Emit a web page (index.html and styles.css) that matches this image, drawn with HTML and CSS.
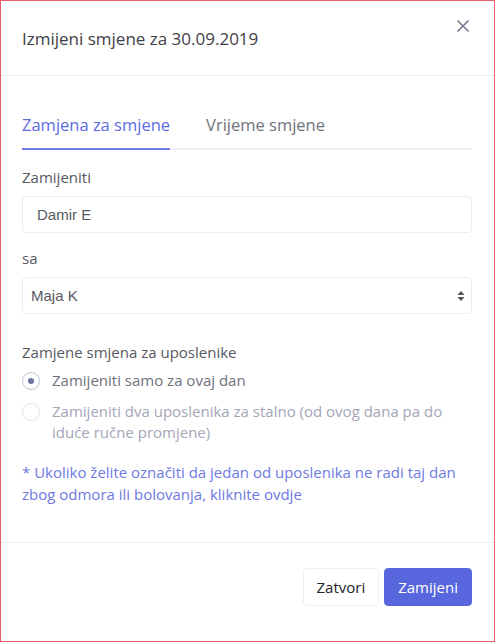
FILE: index.html
```html
<!DOCTYPE html>
<html lang="hr">
<head>
<meta charset="utf-8">
<title>Izmijeni smjene</title>
<link rel="stylesheet" href="styles.css">
</head>
<body>
<div class="modal">
  <div class="modal-header">
    <h5 class="modal-title">Izmijeni smjene za 30.09.2019</h5>
    <button class="close" type="button" aria-label="Close">
      <svg width="14" height="14" viewBox="0 0 14 14"><path d="M1.5 1.5 L12.5 12.5 M12.5 1.5 L1.5 12.5" stroke="#74788d" stroke-width="1.6" fill="none"/></svg>
    </button>
  </div>
  <div class="modal-body">
    <div class="tabs">
      <a class="tab active">Zamjena za smjene</a>
      <a class="tab">Vrijeme smjene</a>
    </div>
    <div class="group">
      <label class="label">Zamijeniti</label>
      <div class="input">Damir E</div>
    </div>
    <div class="group">
      <label class="label">sa</label>
      <div class="input select">
        <span>Maja K</span>
        <svg width="8" height="12" viewBox="0 0 8 12"><path d="M4 1 L7.5 5 L0.5 5 Z M4 11 L7.5 7 L0.5 7 Z" fill="#555"/></svg>
      </div>
    </div>
    <div class="radios">
      <div class="label">Zamjene smjena za uposlenike</div>
      <div class="radio checked"><span class="dot"></span><span>Zamijeniti samo za ovaj dan</span></div>
      <div class="radio disabled"><span class="dot"></span><span>Zamijeniti dva uposlenika za stalno (od ovog dana pa do iduće ručne promjene)</span></div>
    </div>
    <p class="note">* Ukoliko želite označiti da jedan od uposlenika ne radi taj dan zbog odmora ili bolovanja, kliknite ovdje</p>
  </div>
  <div class="modal-footer">
    <button class="btn btn-light" type="button">Zatvori</button>
    <button class="btn btn-primary" type="button">Zamijeni</button>
  </div>
</div>
</body>
</html>
```
FILE: styles.css
```css
* { box-sizing: border-box; }
html, body { margin: 0; padding: 0; background: #fff; }
body { font-family: "Open Sans", "DejaVu Sans", sans-serif; }
.modal {
  width: 495px;
  height: 642px;
  border: 1px solid #ea5a6c;
  background: #fff;
  display: flex;
  flex-direction: column;
}
.modal-header {
  height: 75px;
  flex: none;
  border-bottom: 1px solid #ebedf2;
  display: flex;
  align-items: center;
  justify-content: space-between;
  padding: 0 24px 0 21px;
}
.modal-title {
  margin: 0;
  font-size: 17px;
  font-weight: 400;
  color: #3f4047;
}
.close {
  border: 0;
  background: none;
  padding: 0;
  margin-top: -25px;
  display: flex;
}
.modal-body {
  flex: 1;
  padding: 37px 22px 0 21px;
}
.tabs {
  display: flex;
  border-bottom: 2px solid #f0f1f6;
  margin-bottom: 17px;
}
.tab {
  font-size: 16.5px;
  color: #6f727d;
  padding: 0 0 12px;
  margin-right: 36px;
  margin-bottom: -2px;
  border-bottom: 2px solid transparent;
}
.tab.active { color: #5d6cdf; border-bottom-color: #6e7ce3; }
.group { margin-bottom: 14px; }
.label {
  display: block;
  font-size: 15px;
  color: #575962;
  margin-bottom: 9px;
}
.input {
  height: 37px;
  border: 1px solid #ebedf2;
  border-radius: 4px;
  display: flex;
  align-items: center;
  padding: 0 14px;
  font-family: "Liberation Sans", Arial, sans-serif;
  font-size: 15px;
  color: #575962;
}
.group + .group { margin-top: 15px; }
.select { justify-content: space-between; padding: 0 6px 0 8px; }
.radios { margin-top: 28px; }
.radios .label { margin-bottom: 8px; }
.radio {
  display: flex;
  align-items: flex-start;
  gap: 12px;
  font-size: 15px;
  line-height: 21px;
  color: #6f727d;
  margin-bottom: 10px;
}
.radio .dot {
  flex: none;
  width: 18px;
  height: 18px;
  margin-top: 2px;
  border: 1px solid #bfc3d5;
  border-radius: 50%;
  display: flex;
  align-items: center;
  justify-content: center;
}
.radio.checked .dot::after {
  content: "";
  width: 6px;
  height: 6px;
  border-radius: 50%;
  background: #6a739c;
}
.radio.disabled { color: #a3a6b8; }
.radio.disabled .dot { border-color: #e2e5ec; }
.note {
  margin: 18px 0 0;
  font-size: 15px;
  line-height: 22px;
  color: #6e7ae2;
}
.modal-footer {
  flex: none;
  height: 99px;
  border-top: 1px solid #ebedf2;
  display: flex;
  align-items: center;
  justify-content: flex-end;
  gap: 5px;
  padding: 0 22px 10px;
}
.btn {
  height: 38px;
  border-radius: 4px;
  font-family: inherit;
  font-size: 15px;
  padding: 0 13px;
}
.btn-light { background: #fff; border: 1px solid #ebedf2; color: #212529; }
.btn-primary { background: #5867dd; border: 1px solid #5867dd; color: #fff; }
```
